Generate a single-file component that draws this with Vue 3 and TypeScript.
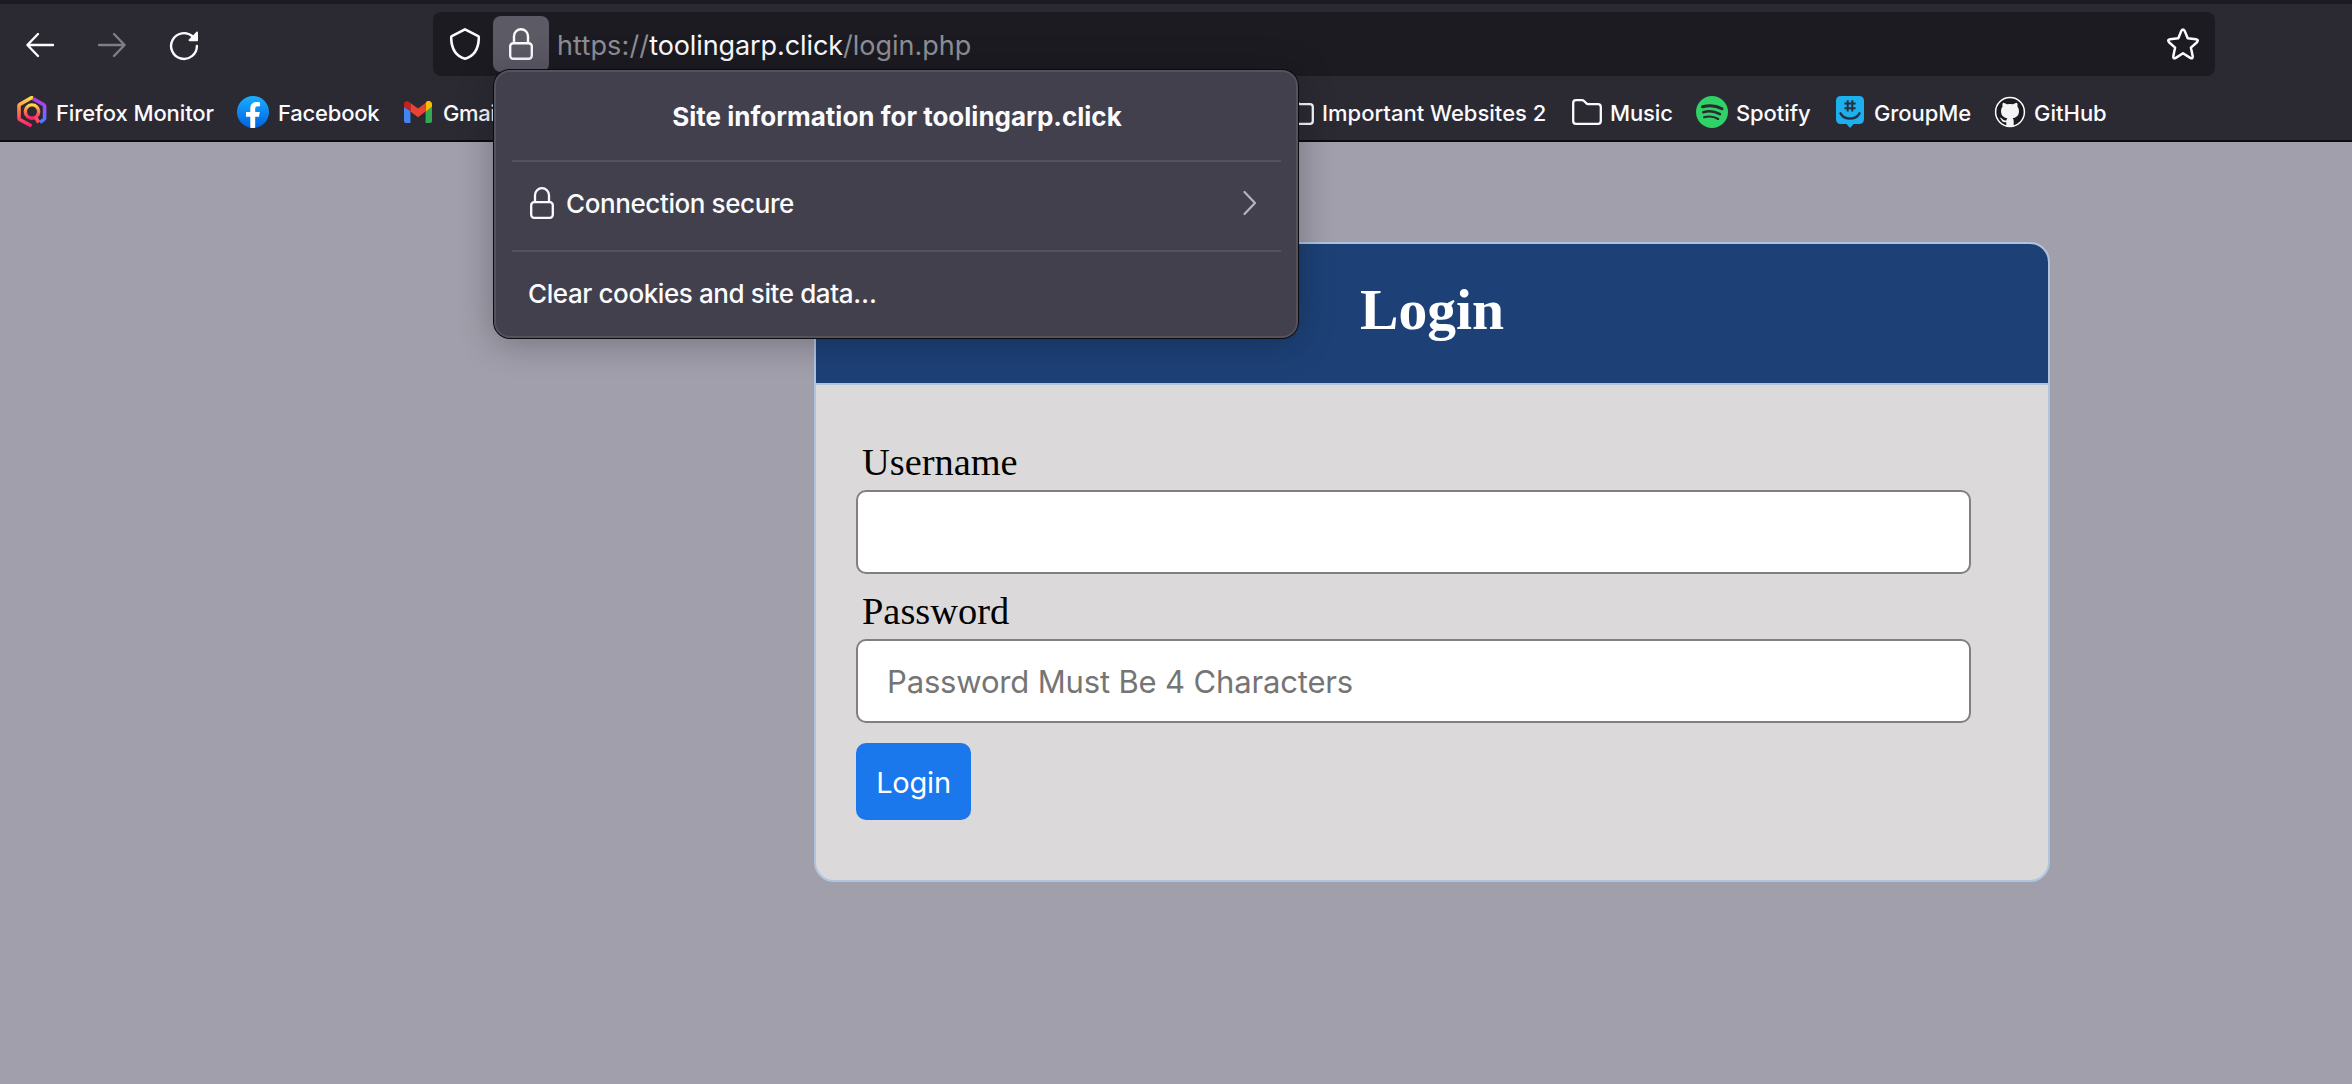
<script setup lang="ts">
import { ref } from 'vue'

const username = ref('')
const password = ref('')
</script>

<template>
  <div class="window">
    <header class="chrome">
      <div class="navbar">
        <div class="nav-buttons">
          <svg class="ico" width="32" height="32" viewBox="0 0 32 32" fill="none" stroke="#fbfbfe" stroke-width="2.4" stroke-linecap="round" stroke-linejoin="round"><path d="M14 5 3.4 16 14 27M3.6 16H29" /></svg>
          <svg class="ico" width="32" height="32" viewBox="0 0 32 32" fill="none" stroke="#7f7e86" stroke-width="2.4" stroke-linecap="round" stroke-linejoin="round"><path d="M18 5 28.6 16 18 27M28.4 16H3" /></svg>
          <svg class="ico" width="32" height="32" viewBox="0 0 32 32"><path d="M28.9 17A12.9 12.9 0 1 1 24.6 7.4" fill="none" stroke="#fbfbfe" stroke-width="2.4" stroke-linecap="round" /><path d="M30 3.2V11.4a.8.8 0 0 1-.8.8H21.6c-1 0-1.300-1-.7-1.700L28.500 2.700C29.100 2.100 30 2.400 30 3.200Z" fill="#fbfbfe" /></svg>
        </div>
        <div class="urlbar">
          <svg class="shield" width="32" height="36" viewBox="0 0 32 36" fill="none" stroke="#fbfbfe" stroke-width="2.600" stroke-linejoin="round"><path d="M16 3.300 29.200 10.200Q30 10.700 29.800 12.500C29.500 21.500 25.500 30 16 32.800C6.500 30 2.500 21.500 2.200 12.500Q2 10.700 2.800 10.200Z" /></svg>
          <div class="identity">
            <svg width="26" height="34" viewBox="0 0 26 34" fill="none" stroke="#fbfbfe" stroke-width="2.400"><rect x="2.200" y="16.200" width="21.600" height="15.600" rx="3" /><path d="M6 16V9.200a7 7 0 0 1 14 0V16" /></svg>
          </div>
          <div class="url"><span class="u1">https://</span><span class="u2">toolingarp.click</span><span class="u3">/login.php</span></div>
          <svg class="star" width="34" height="34" viewBox="0 0 34 34" fill="none" stroke="#fbfbfe" stroke-width="2.500" stroke-linejoin="round"><path d="M15.300 3.900Q17 1.300 18.700 3.900L21.700 11.300L30 12.200Q33 12.800 31 15.200L24.900 20.600L26.700 29.200Q27 32.300 24.200 30.900L17 26.300L9.800 30.900Q7 32.300 7.300 29.200L9.100 20.600L3 15.200Q1 12.800 4 12.200L12.300 11.300Z" /></svg>
        </div>
      </div>

      <nav class="bookmarks">
        <div class="bm b-monitor">
          <svg width="30" height="32" viewBox="0 0 30 32" fill="none">
            <defs>
              <linearGradient id="mon" x1="0" y1="0" x2="0" y2="1"><stop offset="0" stop-color="#ffd84a" /><stop offset=".45" stop-color="#ff7a52" /><stop offset="1" stop-color="#ff1f6d" /></linearGradient>
              <linearGradient id="mon2" x1="0" y1="0" x2="0" y2="1"><stop offset="0" stop-color="#b833e1" /><stop offset=".5" stop-color="#9059ff" /><stop offset="1" stop-color="#4a7dff" /></linearGradient>
            </defs>
            <path d="M16 2 14.500 1.700 2.700 8.500Q2 9 2 9.800V22.200Q2 23 2.700 23.500L14.500 30" stroke="url(#mon)" stroke-width="3.600" />
            <path d="M16 2.600 26.800 8.700Q27.600 9.200 27.600 10V22Q27.600 23 26.800 23.600L23 26.400" stroke="url(#mon2)" stroke-width="3.600" />
            <circle cx="15" cy="15.600" r="6.700" stroke="url(#mon)" stroke-width="3.400" />
            <path d="M18.500 21 21.700 26.500" stroke="#ff4a5e" stroke-width="3.600" />
          </svg>
          <span>Firefox Monitor</span>
        </div>
        <div class="bm b-facebook">
          <svg width="32" height="32" viewBox="0 0 32 32">
            <defs><linearGradient id="fb" x1="0" y1="0" x2="0" y2="1"><stop offset="0" stop-color="#19afff" /><stop offset="1" stop-color="#0062e0" /></linearGradient></defs>
            <circle cx="16" cy="16" r="16" fill="url(#fb)" />
            <path d="M13.300 31.800V20.700H9V16H13.300V12.800C13.300 8.300 15.800 6 19.800 6C21.500 6 23 6.300 23 6.300V10.300H20.900C18.900 10.300 18.200 11.500 18.200 12.800V16H22.800L22 20.700H18.200V31.800Q15.700 32.200 13.300 31.800Z" fill="#fff" />
          </svg>
          <span>Facebook</span>
        </div>
        <div class="bm b-gmail">
          <svg width="28" height="22" viewBox="0 0 28 22">
            <path d="M0 6V20Q0 22 2 22H6.400V9Z" fill="#4285f4" />
            <path d="M28 6V20Q28 22 26 22H21.600V9Z" fill="#34a853" />
            <path d="M21.600 2.200V10.600L28 5.800V3.300C28 .2 24.500-1.200 22.300.8Z" fill="#fbbc04" />
            <path d="M6.400 10.600V1.900L14 7.600 21.600 1.900V10.600L14 16.300Z" fill="#ea4335" />
            <path d="M0 3.300V5.800L6.400 10.600V1.900L5.200 1C3-.8 0 .6 0 3.300Z" fill="#c5221f" />
          </svg>
          <span>Gmail</span>
        </div>
        <div class="bm b-important">
          <svg width="30" height="26" viewBox="0 0 30 26" fill="none" stroke="#fbfbfe" stroke-width="2.300" stroke-linejoin="round"><path d="M1.200 4Q1.200 1.200 4 1.200H10Q11.200 1.200 12 2L14.300 4.300Q15 5.200 16.200 5.200H26Q28.800 5.200 28.800 8V22Q28.800 24.800 26 24.800H4Q1.200 24.800 1.200 22Z" /></svg>
          <span>Important Websites 2</span>
        </div>
        <div class="bm b-music">
          <svg width="30" height="26" viewBox="0 0 30 26" fill="none" stroke="#fbfbfe" stroke-width="2.300" stroke-linejoin="round"><path d="M1.200 4Q1.200 1.200 4 1.200H10Q11.200 1.200 12 2L14.300 4.300Q15 5.200 16.200 5.200H26Q28.800 5.200 28.800 8V22Q28.800 24.800 26 24.800H4Q1.200 24.800 1.200 22Z" /></svg>
          <span>Music</span>
        </div>
        <div class="bm b-spotify">
          <svg width="32" height="32" viewBox="0 0 32 32" fill="none" stroke="#2b2a33" stroke-linecap="round"><circle cx="16" cy="16" r="16" fill="#2ed266" stroke="none" /><path d="M6.500 10.800C13 9 20.500 9.700 26 12.800" stroke-width="3" /><path d="M7.300 16.200C13 14.600 19 15.400 24 18.200" stroke-width="2.500" /><path d="M8 21.200C13 19.900 18 20.500 22.200 23" stroke-width="2.100" /></svg>
          <span>Spotify</span>
        </div>
        <div class="bm b-groupme">
          <svg width="28" height="32" viewBox="0 0 28 32"><path d="M5 0H23Q28 0 28 5V23Q28 28 23 28H17.500L14 32 10.500 28H5Q0 28 0 23V5Q0 0 5 0Z" fill="#1cb0ee" /><path d="M11.700 4.200V15.400M16.300 4.200V15.400M8.400 7.400H19.600M8.400 12.200H19.600" stroke="#25313f" stroke-width="2" /><path d="M4.500 17.300C8.500 24.300 19.500 24.300 23.500 17.300" fill="none" stroke="#25313f" stroke-width="2.400" stroke-linecap="round" /></svg>
          <span>GroupMe</span>
        </div>
        <div class="bm b-github">
          <svg width="32" height="32" viewBox="0 0 32 32"><circle cx="16" cy="16" r="14.400" fill="#1b1b20" stroke="#fff" stroke-width="1.500" /><path d="M12.300 30.400V26.200C9 26.800 8 25.300 7.200 23.600Q6.500 22.500 5.500 21.800C8.500 21.500 8.500 25.300 12.500 24.200Q12.600 22.800 13.400 22.100C9.500 21.500 7 19.500 7 14.900Q7 12.300 8.600 10.600Q8 8.500 8.900 6.700Q10.600 6.600 13 8.300Q16 7.500 19 8.300Q21.400 6.600 23.100 6.700Q24 8.500 23.400 10.600Q25 12.300 25 14.900C25 19.500 22.500 21.500 18.600 22.100Q19.700 23.200 19.700 25V30.400Q16 31.400 12.300 30.400Z" fill="#f4f4f4" /></svg>
          <span>GitHub</span>
        </div>
      </nav>
    </header>

    <section class="popup">
      <h2><span>Site information for toolingarp.click</span></h2>
      <div class="row conn">
        <svg width="26" height="34" viewBox="0 0 26 34" fill="none" stroke="#fbfbfe" stroke-width="2.300"><rect x="2.200" y="16.200" width="21.600" height="15.600" rx="3" /><path d="M6 16V9.200a7 7 0 0 1 14 0V16" /></svg>
        <span class="t-conn">Connection secure</span>
        <svg class="chev" width="16" height="28" viewBox="0 0 16 28" fill="none" stroke="#b5b4bb" stroke-width="2.200" stroke-linecap="round" stroke-linejoin="round"><path d="M2.500 3 13 14 2.500 25" /></svg>
      </div>
      <div class="row clear"><span class="t-clear">Clear cookies and site data…</span></div>
    </section>

    <main class="page">
      <div class="card">
        <div class="card-head"><h1>Login</h1></div>
        <form class="card-body" @submit.prevent>
          <label for="user">Username</label>
          <input id="user" v-model="username" type="text" />
          <label for="pass">Password</label>
          <input id="pass" v-model="password" type="password" placeholder="Password Must Be 4 Characters" />
          <button type="submit">Login</button>
        </form>
      </div>
    </main>
  </div>
</template>

<style>
body {
  margin: 0;
  background: #a09fab;
}
</style>

<style scoped>
* {
  box-sizing: border-box;
}
svg {
  display: block;
  flex: none;
}
.window {
  position: relative;
  width: 2352px;
  height: 1084px;
  overflow: hidden;
  background: #a09fab;
  font-family: Inter, 'Liberation Sans', sans-serif;
  color: #fbfbfe;
  white-space: nowrap;
}
.chrome {
  height: 142px;
  background: #2b2a33;
  border-top: 4px solid #1c1b22;
  border-bottom: 2px solid #0c0c0d;
}
.navbar {
  display: flex;
  padding: 8px 137px 0 24px;
}
.nav-buttons {
  display: flex;
  gap: 40px;
  width: 409px;
  padding-top: 17px;
}
.urlbar {
  display: flex;
  flex: 1;
  align-items: center;
  height: 64px;
  padding: 0 15px 0 16px;
  background: #1c1b22;
  border-radius: 8px;
}
.shield {
  margin-top: -1px;
}
.identity {
  display: flex;
  align-items: center;
  justify-content: center;
  width: 56px;
  height: 56px;
  margin-left: 12px;
  background: #5b5a65;
  border-radius: 8px;
}
.url {
  flex: 1;
  padding: 3px 0 0 8px;
  font-size: 27px;
  line-height: 36px;
  color: #8f8e96;
}
.u1 {
  letter-spacing: 0.15px;
}
.u2 {
  color: #fbfbfe;
  letter-spacing: -0.1px;
}
.bookmarks {
  height: 60px;
  display: flex;
}
.bm {
  display: flex;
  align-items: center;
  flex: none;
  height: 32px;
  margin-top: 20px;
  font-size: 22px;
  font-weight: 500;
  letter-spacing: -0.1px;
}
.bm span {
  padding-top: 2px;
}
.b-monitor { width: 220px; margin-left: 17px; gap: 9px; }
.b-facebook { width: 167px; gap: 9px; letter-spacing: -0.2px; }
.b-gmail { width: 880px; gap: 11px; letter-spacing: -0.4px; }
.b-important { width: 288px; gap: 8px; letter-spacing: 0; }
.b-music { width: 124px; gap: 8px; }
.b-spotify { width: 140px; gap: 8px; }
.b-groupme { width: 158px; gap: 10px; }
.b-github { width: 130px; gap: 8px; letter-spacing: 0; }
.popup {
  position: absolute;
  left: 494px;
  top: 70px;
  width: 804px;
  height: 268px;
  padding: 0 15px 0 16px;
  background: #42404d;
  border: 2px solid #53525e;
  border-radius: 16px;
  box-shadow: 0 0 0 1px #0c0c0d, 0 4px 36px rgba(12, 12, 20, 0.32);
}
.popup h2 {
  display: flex;
  align-items: center;
  justify-content: center;
  height: 88px;
  margin: 0;
  padding-left: 1px;
  font-size: 26px;
  font-weight: 700;
}
.row {
  display: flex;
  align-items: center;
  height: 90px;
  border-top: 2px solid #53525e;
  font-size: 26px;
  font-weight: 500;
  letter-spacing: -0.4px;
}
.conn {
  padding: 0 23px 7px 17px;
}
.conn span {
  flex: 1;
  padding: 1px 0 0 11px;
}
.clear {
  padding: 0 0 6px 16px;
}
.page {
  padding: 100px 302px 0 814px;
}
.card {
  height: 640px;
  background: #dbd9da;
  border: 2px solid #b0c4de;
  border-radius: 20px;
  overflow: hidden;
}
.card-head {
  display: flex;
  justify-content: center;
  align-items: center;
  height: 141px;
  padding-bottom: 8px;
  background: #1d4177;
  border-bottom: 2px solid #b0c4de;
}
h1 {
  margin: 0;
  font: bold 57.600px/66px 'Liberation Serif', serif;
  color: #fff;
}
.card-body {
  display: flex;
  flex-direction: column;
  align-items: flex-start;
  padding: 55px 77px 0 40px;
}
label {
  height: 44px;
  margin: 0 0 6px 6px;
  font: 38.400px/44px 'Liberation Serif', serif;
  color: #000;
}
input {
  width: 1115px;
  height: 84px;
  margin-bottom: 15px;
  padding: 1px 29px 0;
  background: #fff;
  border: 2px solid #808080;
  border-radius: 10px;
  outline: none;
  font-family: Inter, 'Liberation Sans', sans-serif;
  font-size: 31px;
  letter-spacing: -0.16px;
}
input::placeholder {
  color: #757575;
  opacity: 1;
}
button {
  width: 115px;
  height: 77px;
  margin-top: 5px;
  padding: 2px 0 0;
  background: #1a77ec;
  border: 0;
  border-radius: 10px;
  color: #fff;
  font-family: Inter, 'Liberation Sans', sans-serif;
  font-size: 29px;
  letter-spacing: -0.2px;
}
</style>
